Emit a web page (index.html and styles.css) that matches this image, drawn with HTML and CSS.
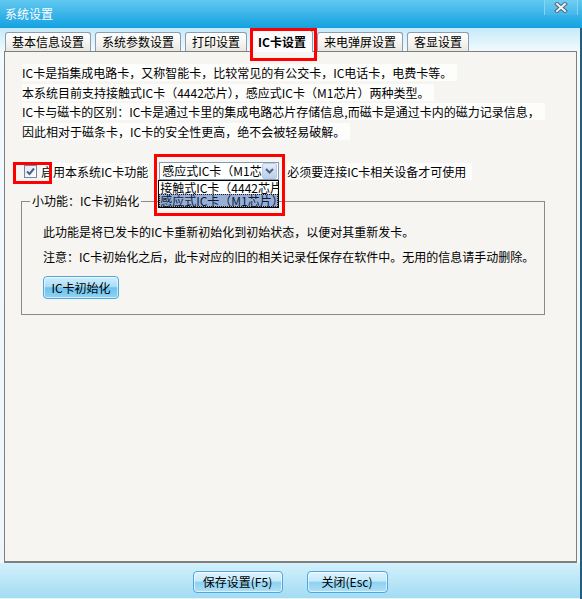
FILE: index.html
```html
<!DOCTYPE html>
<html lang="zh-CN">
<head>
<meta charset="utf-8">
<title>系统设置</title>
<link rel="stylesheet" href="styles.css">
</head>
<body>
<div class="window">
  <div class="titlebar">
    <span class="title">系统设置</span>
    <button class="close" aria-label="关闭">
      <svg width="14" height="11" viewBox="0 0 14 11">
        <path d="M3 2 L11 9 M11 2 L3 9" stroke="#52677a" stroke-width="4" stroke-linecap="square" fill="none"/>
        <path d="M3 2 L11 9 M11 2 L3 9" stroke="#eef3f6" stroke-width="2" stroke-linecap="square" fill="none"/>
      </svg>
    </button>
  </div>
  <div class="frame">
    <div class="tabstrip">
      <div class="tab">基本信息设置</div>
      <div class="tab">系统参数设置</div>
      <div class="tab">打印设置</div>
      <div class="tab active">IC卡设置<span class="mark mark-tab"></span></div>
      <div class="tab">来电弹屏设置</div>
      <div class="tab">客显设置</div>
    </div>
    <div class="panel">
      <div class="intro">
        <p><span>IC卡是指集成电路卡，又称智能卡，比较常见的有公交卡，IC电话卡，电费卡等。</span></p>
        <p><span>本系统目前支持接触式IC卡（4442芯片），感应式IC卡（M1芯片）两种类型。</span></p>
        <p><span>IC卡与磁卡的区别：IC卡是通过卡里的集成电路芯片存储信息,而磁卡是通过卡内的磁力记录信息，</span></p>
        <p><span>因此相对于磁条卡，IC卡的安全性更高，绝不会被轻易破解。</span></p>
      </div>
      <div class="enable-row">
        <label class="check">
          <span class="box">
            <svg width="11" height="11" viewBox="0 0 11 11"><path d="M2 5.5 L4.5 8 L9 2.5" stroke="#4a6288" stroke-width="2" fill="none"/></svg>
            <span class="mark mark-check"></span>
          </span>
          <span class="lbl">启用本系统IC卡功能</span>
        </label>
        <div class="combo">
          <div class="select">
            <span class="val">感应式IC卡（M1芯.</span>
            <span class="arrow"><svg width="9" height="6" viewBox="0 0 9 6"><path d="M1 1 L4.5 4.5 L8 1" stroke="#4d6185" stroke-width="2" fill="none"/></svg></span>
          </div>
          <ul class="droplist">
            <li>接触式IC卡（4442芯片</li>
            <li class="sel">感应式IC卡（M1芯片）</li>
          </ul>
          <span class="mark mark-combo"></span>
        </div>
        <span class="hint">必须要连接IC卡相关设备才可使用</span>
      </div>
      <fieldset class="group">
        <legend>小功能：IC卡初始化</legend>
        <div class="group-body">
          <p>此功能是将已发卡的IC卡重新初始化到初始状态，以便对其重新发卡。</p>
          <p>注意：IC卡初始化之后，此卡对应的旧的相关记录任保存在软件中。无用的信息请手动删除。</p>
          <button class="btn btn-init">IC卡初始化</button>
        </div>
      </fieldset>
    </div>
    <div class="footer">
      <button class="btn btn-save">保存设置(F5)</button>
      <button class="btn btn-close">关闭(Esc)</button>
    </div>
  </div>
</div>
</body>
</html>
```
FILE: styles.css
```css
* { box-sizing: border-box; }
html, body { margin: 0; padding: 0; }
body {
  width: 582px;
  height: 599px;
  overflow: hidden;
  font-family: "Noto Sans CJK SC", "Noto Sans", sans-serif;
  font-size: 12px;
  color: #000;
  background: #fff;
}
.window {
  width: 582px;
  height: 599px;
  display: flex;
  flex-direction: column;
}
.titlebar {
  height: 28px;
  flex: none;
  display: flex;
  align-items: flex-start;
  justify-content: space-between;
  background: linear-gradient(#62c9f0, #3ab4e9 50%, #13a2e0);
}
.title {
  color: #fff;
  line-height: 28px;
  padding-left: 5px;
}
.close {
  width: 34px;
  height: 15px;
  margin-right: 4px;
  padding: 0;
  border: 0;
  border-left: 1px solid #86d6f3;
  border-right: 1px solid #86d6f3;
  background: linear-gradient(#6fcdf1, #43b7ea);
  display: flex;
  align-items: center;
  justify-content: center;
}
.frame {
  flex: 1;
  display: flex;
  flex-direction: column;
  border-right: 2px solid #245d7d;
  background: linear-gradient(#c6eaf9, #f2fafd 23px, #eef6f9 100%);
}
.tabstrip {
  height: 23px;
  flex: none;
  display: flex;
  align-items: flex-end;
  gap: 4px;
  padding-left: 5px;
  position: relative;
  z-index: 2;
}
.tab {
  height: 19px;
  padding: 0 6px;
  border: 1px solid #8c9db3;
  border-bottom: 0;
  border-radius: 3px 3px 0 0;
  background: linear-gradient(#ffffff, #f4f3ee 60%, #e8e7e0);
  line-height: 18px;
  white-space: nowrap;
}
.tab.active {
  height: 22px;
  margin-bottom: -1px;
  background: #fcfcfe;
  font-weight: bold;
  line-height: 21px;
  position: relative;
}
.mark {
  position: absolute;
  border: 3px solid #ff0000;
  pointer-events: none;
  z-index: 5;
}
.mark-tab { left: -2px; top: -3px; width: 67px; height: 33px; }
.panel {
  flex: 1;
  margin: 0 3px 0 4px;
  border: 1px solid #7f7f7f;
  border-bottom-width: 2px;
  background: #f6f5f1;
  position: relative;
}
.intro { padding: 11px 0 0 17px; }
.intro p {
  margin: 0;
  line-height: 19.5px;
  white-space: nowrap;
}
.intro span { background: #fdfdfc; padding-right: 5px; }
.enable-row {
  margin: 21px 0 0 19px;
  height: 18px;
  display: flex;
  align-items: center;
  white-space: nowrap;
}
.check { display: flex; align-items: center; }
.box {
  width: 13px;
  height: 13px;
  border: 1px solid #6f87aa;
  background: linear-gradient(135deg, #e4e8ee, #ffffff);
  position: relative;
  display: flex;
  align-items: center;
  justify-content: center;
}
.mark-check { left: -12px; top: -4px; width: 39px; height: 22px; }
.lbl { margin-left: 4px; background: #fdfdfc; padding-right: 1px; }
.combo {
  position: relative;
  width: 120px;
  height: 18px;
  margin-left: 10px;
}
.select {
  height: 18px;
  border: 1px solid #7f9db9;
  background: #fff;
  position: relative;
  overflow: hidden;
  line-height: 16px;
  padding-left: 2px;
}
.val { display: block; width: 103px; overflow: hidden; white-space: nowrap; }
.arrow {
  position: absolute;
  right: 1px;
  top: 0;
  width: 15px;
  height: 16px;
  border: 1px solid #b9cbe4;
  border-radius: 2px;
  background: linear-gradient(#e4ecf8, #bccee9);
  display: flex;
  align-items: center;
  justify-content: center;
}
.droplist {
  position: absolute;
  left: -1px;
  top: 18px;
  width: 121px;
  margin: 0;
  padding: 0;
  list-style: none;
  border: 1px solid #000;
  background: #fff;
  overflow: hidden;
  z-index: 3;
}
.droplist li {
  height: 13px;
  line-height: 13px;
  white-space: nowrap;
  padding-left: 1px;
}
.droplist li.sel {
  background: #97afd7;
  outline: 1px dotted #1a1a1a;
  outline-offset: -1px;
  color: #0c1a33;
}
.mark-combo { left: -5px; top: -8px; width: 131px; height: 62px; }
.hint { margin-left: 8px; background: #fdfdfc; padding-right: 6px; }
.group {
  margin: 14px 0 0 16px;
  width: 524px;
  padding: 0;
  border: 1px solid #8a8a8a;
  min-width: 0;
}
.group legend {
  margin-left: 8px;
  padding: 0 2px;
  line-height: 14px;
}
.group-body { padding: 14px 0 15px 21px; }
.group-body p {
  margin: 0 0 5px;
  line-height: 20px;
  white-space: nowrap;
}
.btn {
  height: 22px;
  padding: 0;
  border: 1px solid #4fa8dd;
  border-radius: 4px;
  background: linear-gradient(#e0f4fd 0%, #c4e9fa 45%, #8ed2f2 52%, #ace0f6 100%);
  box-shadow: inset 0 0 0 1px rgba(255,255,255,0.6);
  font-family: inherit;
  font-size: 12px;
  color: #000;
  line-height: 20px;
}
.btn-init {
  width: 76px;
  height: 23px;
  margin-top: 4px;
  background: linear-gradient(#d2effc 0%, #a9ddf6 45%, #6cc3ee 52%, #8fd3f4 100%);
}
.footer {
  height: 36px;
  flex: none;
  display: flex;
  justify-content: center;
  align-items: flex-start;
  gap: 24px;
  padding-top: 8px;
  background: linear-gradient(#d4f0fb, #a2dcf4);
  border-bottom: 1px solid #e6f5fb;
}
.btn-save { width: 90px; }
.btn-close { width: 81px; }
```
